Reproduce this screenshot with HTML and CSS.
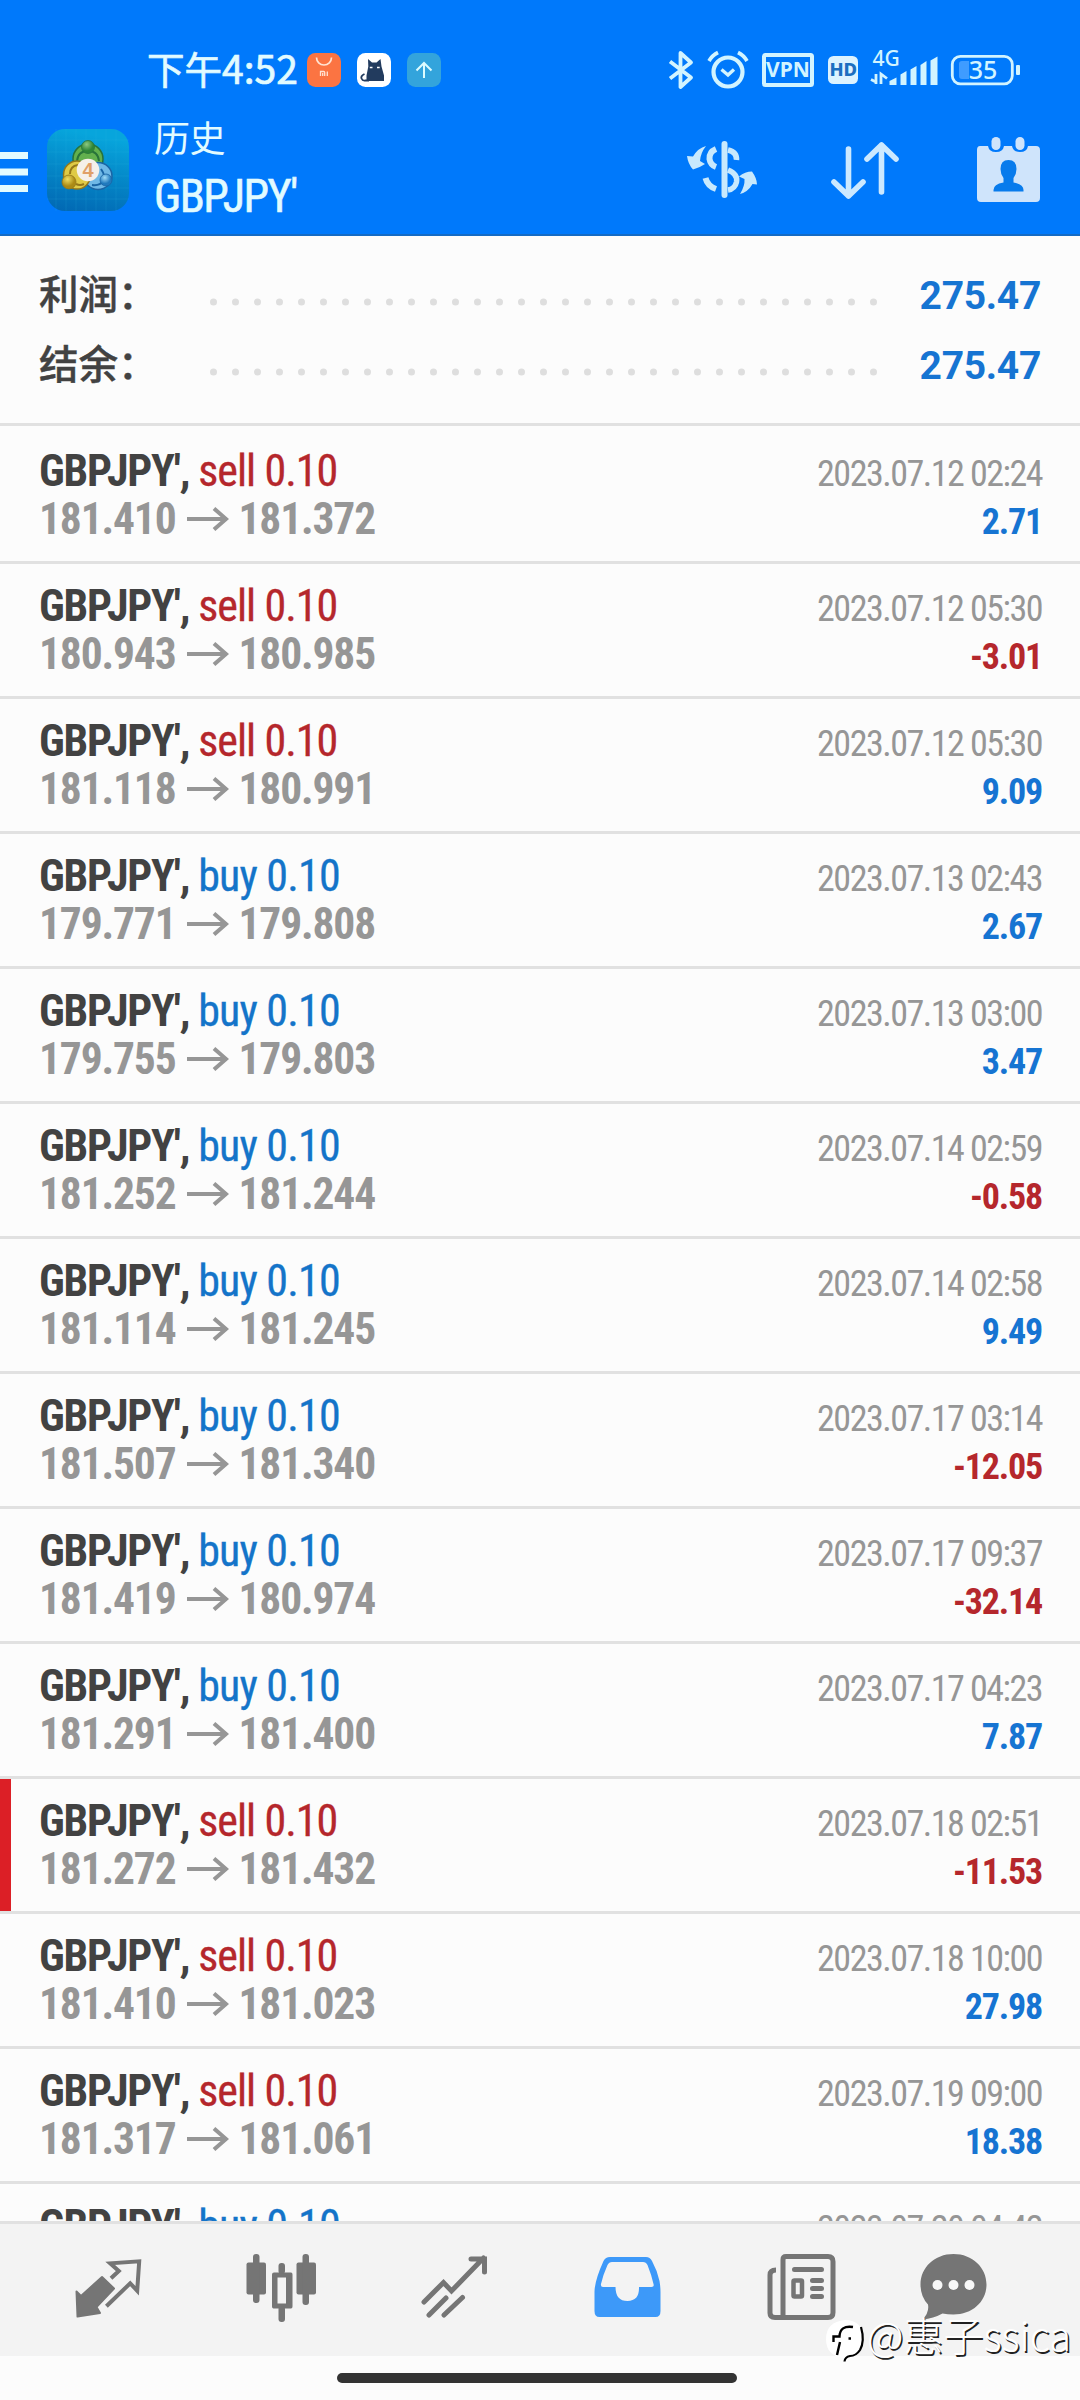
FILE: index.html
```html
<!DOCTYPE html>
<html lang="zh-CN">
<head>
<meta charset="utf-8">
<title>历史</title>
<link rel="stylesheet" href="styles.css">
</head>
<body>
<div class="screen">
  <header class="header">
    <div class="status">
      <div class="clock">下午<span class="digits">4:52</span></div>
      <div class="notifs">
        <svg width="34" height="34" viewBox="0 0 34 34"><rect width="34" height="34" rx="8.5" fill="#fb7442"/><path d="M9.500 4.500a7.500 7.500 0 0 0 15 0" fill="none" stroke="#ffe3d2" stroke-width="1.700"/><path d="M13.500 23v-4.500h3.200q1 0 1 1V23M15.700 20v3M20.300 18.500V23" fill="none" stroke="#ffe3d2" stroke-width="1.300"/></svg>
        <svg width="34" height="34" viewBox="0 0 34 34"><rect width="34" height="34" rx="8.500" fill="#fff"/><path d="M11 6l4 3.500h4.500L23.500 6l1 7.500 2.500 9V28H9.500v-5.500l1.800-9z" fill="#223b5e"/><path d="M7.500 21q-4 2-3 4.500t4 2H12" fill="none" stroke="#223b5e" stroke-width="1.800"/><path d="M12.800 14.500h2.700M20 14.500h2.700" stroke="#fff" stroke-width="1.300"/></svg>
        <svg width="34" height="34" viewBox="0 0 34 34"><rect width="34" height="34" rx="8.500" fill="#33a4dc"/><path d="M17 25V10.500M9.500 17.500L17 10l7.500 7.500" fill="none" stroke="#dcfbff" stroke-width="2"/></svg>
      </div>
      <div class="system">
        <svg width="38" height="50" viewBox="0 0 38 50"><path d="M4 16.500L25 32.500 14.500 42V8L25 17.500 4 33.500" fill="none" stroke="#d2f4ff" stroke-width="3.800" stroke-linejoin="round"/></svg>
        <svg width="53" height="50" viewBox="0 0 53 50"><circle cx="24" cy="27" r="14.500" fill="none" stroke="#d2f4ff" stroke-width="4.200"/><path d="M17.500 24.500l6.500 5.500 6-5.500" fill="none" stroke="#d2f4ff" stroke-width="3.300"/><path d="M5 16q3-5.500 9-8.500M43 16q-3-5.500-9-8.500" fill="none" stroke="#d2f4ff" stroke-width="3.700"/></svg>
        <svg width="62" height="50" viewBox="0 0 62 50"><rect x="7" y="10" width="48" height="30" rx="1.500" fill="none" stroke="#d2f4ff" stroke-width="4"/><text x="31" y="32" text-anchor="middle" class="vpn">VPN</text></svg>
        <svg width="46" height="50" viewBox="0 0 46 50"><rect x="9" y="11" width="30" height="28" rx="5.500" fill="#dcf3ff"/><text x="24.300" y="31" text-anchor="middle" class="hd">HD</text></svg>
        <svg width="80" height="50" viewBox="0 0 80 50"><text x="7.500" y="21" class="net">4G</text><path d="M6 34.500l5 2.500M11 29v10M16 39V29l6 4.500" fill="none" stroke="#d2f4ff" stroke-width="2.800"/><path d="M24.500 40v-4l7-3.500V40zM35.500 40V29.500l6-3.500v14zM45.500 40V24.500l6-3.500v19zM55.500 40V20l6-4v24zM65.500 40V15.500l7-4V40z" fill="#d2f4ff"/></svg>
        <svg width="82" height="50" viewBox="0 0 82 50"><rect x="7.300" y="11.300" width="60" height="27.500" rx="8" fill="none" stroke="#d2f4ff" stroke-width="2.800"/><path d="M17 16h7v18h-7q-3 0-3-3V19q0-3 3-3z" fill="#3f9cff"/><rect x="71" y="20" width="4" height="10" rx="1" fill="#d2f4ff"/><text x="38" y="34" text-anchor="middle" class="level">35</text></svg>
      </div>
    </div>
    <div class="toolbar">
      <svg class="burger" width="28" height="40" viewBox="0 0 28 40"><path d="M0 3.500h28M0 20h28M0 36.500h28" stroke="#e2fbff" stroke-width="7"/></svg>
      <svg class="logo" width="84" height="84" viewBox="0 0 84 84">
        <defs>
          <linearGradient id="tile" x1="0.200" y1="0" x2="0" y2="1"><stop offset="0" stop-color="#07a5dc"/><stop offset=".55" stop-color="#0482c4"/><stop offset="1" stop-color="#0166b2"/></linearGradient>
          <radialGradient id="green" cx=".4" cy=".3"><stop offset="0" stop-color="#8cc880"/><stop offset="1" stop-color="#2f8536"/></radialGradient>
          <radialGradient id="gold" cx=".4" cy=".3"><stop offset="0" stop-color="#f0df62"/><stop offset="1" stop-color="#ab8a15"/></radialGradient>
          <radialGradient id="sky" cx=".4" cy=".3"><stop offset="0" stop-color="#a0dcf8"/><stop offset="1" stop-color="#2079bd"/></radialGradient>
        </defs>
        <rect x="1" y="1" width="82" height="82" rx="18" fill="url(#tile)"/>
        <path d="M10 1v82M20 1v82M30 1v82M40 1v82M50 1v82M60 1v82M70 1v82M1 12h82M1 24h82M1 36h82M1 48h82M1 60h82M1 71h82" stroke="#35bce5" stroke-width=".5" opacity=".3"/>
        <circle cx="42" cy="31" r="15" fill="#62b04e" stroke="#28733a" stroke-width="1.500"/>
        <path d="M31 33q1-10 11-10t11 10" fill="none" stroke="#28733a" stroke-width="2"/>
        <ellipse cx="52" cy="48" rx="14" ry="13.500" fill="#6fb8e6" stroke="#1a65a5" stroke-width="1.500"/>
        <path d="M46 57q8 1 11-4t-2-12" fill="none" stroke="#1a65a5" stroke-width="2"/>
        <ellipse cx="31" cy="47" rx="13.500" ry="14" fill="#dfca45" stroke="#947719" stroke-width="1.500"/>
        <path d="M24 46q0-8 8-9M30 56q4 2 8 0" fill="none" stroke="#947719" stroke-width="2"/>
        <circle cx="42" cy="19" r="6.500" fill="url(#green)" stroke="#28733a" stroke-width=".8"/><circle cx="23" cy="54" r="7" fill="url(#gold)" stroke="#947719" stroke-width=".8"/><circle cx="60" cy="52" r="6" fill="url(#sky)" stroke="#1a65a5" stroke-width=".8"/>
        <circle cx="42" cy="42" r="11.300" fill="#f5f0e9"/><text x="42" y="49" text-anchor="middle" class="four">4</text>
      </svg>
      <div class="titles">
        <div class="title">历史</div>
        <div class="subtitle">GBPJPY'</div>
      </div>
      <div class="actions">
        <svg width="117" height="80" viewBox="0 0 117 80"><g fill="none" stroke="#c8e9fd"><path d="M46.500 14v51" stroke-width="6" stroke-linecap="round"/><path d="M38 19q-7 3-6.500 10 1 6 6.500 8M27.500 48q2 8 10.500 11" stroke-width="6"/><path d="M50 20q9 2 8.500 10M50 40q10 4 8.500 12Q57 59 50 60" stroke-width="5.500"/></g><path d="M28 16q-8 2-13 10.500l-6-.5q1 8 6 13.500 7-2 12-5.500l-5-3q.5-8 6-15zM62 64q8-2 12.500-10l4.500.5q0-6-5-13-7 0-13 5l5.500 2.500Q67 56 62 64z" fill="#c8e9fd"/></svg>
        <svg width="141" height="80" viewBox="0 0 141 80"><path d="M53.500 19v47M39 52l14.500 14L68 52M86.500 62V15M72 29l14.500-14L101 29" fill="none" stroke="#cce9ff" stroke-width="5.600" stroke-linecap="round" stroke-linejoin="round"/></svg>
        <svg width="144" height="80" viewBox="0 0 144 80"><path d="M44 16h8q1 6 8 6t8-6h8q1 6 8 6t8-6h8q4 0 4 4v48q0 4-4 4H45q-4 0-4-4V20q0-4 3-4z" fill="#cfe4fb"/><rect x="55.500" y="7" width="9" height="13" rx="4.500" fill="#cfe4fb"/><rect x="79.500" y="7" width="9" height="13" rx="4.500" fill="#cfe4fb"/><path d="M72.500 30q8 0 8 9 0 5-3 9v4.500q10 2 10 7.500v1.500h-30V60q0-6 10-7.500V48q-3-4-3-9 0-9 8-9z" fill="#087bec"/></svg>
      </div>
    </div>
  </header>

  <section class="summary">
    <div class="sum"><span class="label">利润：</span><svg class="dots" width="667" height="8" viewBox="0 0 667 8"><path d="M3.500 4h661" stroke="#dedede" stroke-width="7" stroke-linecap="round" stroke-dasharray="0 22"/></svg><span class="total">275.47</span></div>
    <div class="sum"><span class="label">结余：</span><svg class="dots" width="667" height="8" viewBox="0 0 667 8"><path d="M3.500 4h661" stroke="#dedede" stroke-width="7" stroke-linecap="round" stroke-dasharray="0 22"/></svg><span class="total">275.47</span></div>
  </section>

  <svg class="defs" width="0" height="0"><symbol id="arrow" viewBox="0 0 42 24"><path d="M0 12h39M27 1.500L39 12 27 22.500" fill="none" stroke="currentColor" stroke-width="4"/></symbol></svg>

  <main class="deals">
    <div class="deal"><div class="left"><div class="name">GBPJPY', <span class="sell">sell 0.10</span></div><div class="price">181.410<svg class="arrow"><use href="#arrow"/></svg>181.372</div></div><div class="right"><div class="date">2023.07.12 02:24</div><div class="gain">2.71</div></div></div>
    <div class="deal"><div class="left"><div class="name">GBPJPY', <span class="sell">sell 0.10</span></div><div class="price">180.943<svg class="arrow"><use href="#arrow"/></svg>180.985</div></div><div class="right"><div class="date">2023.07.12 05:30</div><div class="gain loss">-3.01</div></div></div>
    <div class="deal"><div class="left"><div class="name">GBPJPY', <span class="sell">sell 0.10</span></div><div class="price">181.118<svg class="arrow"><use href="#arrow"/></svg>180.991</div></div><div class="right"><div class="date">2023.07.12 05:30</div><div class="gain">9.09</div></div></div>
    <div class="deal"><div class="left"><div class="name">GBPJPY', <span class="buy">buy 0.10</span></div><div class="price">179.771<svg class="arrow"><use href="#arrow"/></svg>179.808</div></div><div class="right"><div class="date">2023.07.13 02:43</div><div class="gain">2.67</div></div></div>
    <div class="deal"><div class="left"><div class="name">GBPJPY', <span class="buy">buy 0.10</span></div><div class="price">179.755<svg class="arrow"><use href="#arrow"/></svg>179.803</div></div><div class="right"><div class="date">2023.07.13 03:00</div><div class="gain">3.47</div></div></div>
    <div class="deal"><div class="left"><div class="name">GBPJPY', <span class="buy">buy 0.10</span></div><div class="price">181.252<svg class="arrow"><use href="#arrow"/></svg>181.244</div></div><div class="right"><div class="date">2023.07.14 02:59</div><div class="gain loss">-0.58</div></div></div>
    <div class="deal"><div class="left"><div class="name">GBPJPY', <span class="buy">buy 0.10</span></div><div class="price">181.114<svg class="arrow"><use href="#arrow"/></svg>181.245</div></div><div class="right"><div class="date">2023.07.14 02:58</div><div class="gain">9.49</div></div></div>
    <div class="deal"><div class="left"><div class="name">GBPJPY', <span class="buy">buy 0.10</span></div><div class="price">181.507<svg class="arrow"><use href="#arrow"/></svg>181.340</div></div><div class="right"><div class="date">2023.07.17 03:14</div><div class="gain loss">-12.05</div></div></div>
    <div class="deal"><div class="left"><div class="name">GBPJPY', <span class="buy">buy 0.10</span></div><div class="price">181.419<svg class="arrow"><use href="#arrow"/></svg>180.974</div></div><div class="right"><div class="date">2023.07.17 09:37</div><div class="gain loss">-32.14</div></div></div>
    <div class="deal"><div class="left"><div class="name">GBPJPY', <span class="buy">buy 0.10</span></div><div class="price">181.291<svg class="arrow"><use href="#arrow"/></svg>181.400</div></div><div class="right"><div class="date">2023.07.17 04:23</div><div class="gain">7.87</div></div></div>
    <div class="deal marked"><div class="left"><div class="name">GBPJPY', <span class="sell">sell 0.10</span></div><div class="price">181.272<svg class="arrow"><use href="#arrow"/></svg>181.432</div></div><div class="right"><div class="date">2023.07.18 02:51</div><div class="gain loss">-11.53</div></div></div>
    <div class="deal"><div class="left"><div class="name">GBPJPY', <span class="sell">sell 0.10</span></div><div class="price">181.410<svg class="arrow"><use href="#arrow"/></svg>181.023</div></div><div class="right"><div class="date">2023.07.18 10:00</div><div class="gain">27.98</div></div></div>
    <div class="deal"><div class="left"><div class="name">GBPJPY', <span class="sell">sell 0.10</span></div><div class="price">181.317<svg class="arrow"><use href="#arrow"/></svg>181.061</div></div><div class="right"><div class="date">2023.07.19 09:00</div><div class="gain">18.38</div></div></div>
    <div class="deal"><div class="left"><div class="name">GBPJPY', <span class="buy">buy 0.10</span></div></div><div class="right"><div class="date">2023.07.20 04:42</div></div></div>
  </main>

  <nav class="tabs">
    <svg width="193" height="132" viewBox="0 0 193 132"><path d="M102 53l12 11.500L96.500 83l3.500 6-22.500 3.500-1-25 4.500 4.500z" fill="#757575" stroke="#757575" stroke-width="2" stroke-linejoin="round"/><path d="M111 54.300l7.800-7.300-8.600-7.700 29-2-2 29.400-7-7.400-23.800 23" fill="none" stroke="#757575" stroke-width="4"/></svg>
    <svg width="175" height="132" viewBox="0 0 175 132"><g fill="#757575"><rect x="53.500" y="38.500" width="19.500" height="32" rx="2"/><rect x="60" y="30" width="6.500" height="49" rx="3"/><rect x="103.500" y="38.500" width="19.500" height="32" rx="2"/><rect x="109.500" y="30" width="6.500" height="51" rx="3"/><path d="M81 48.500h17q1.500 0 1.500 2v32q0 2-1.500 2H80.500q-1.500 0-1.500-2v-32q0-2 2-2zM84.500 53.500v26h8.500v-26z" fill-rule="evenodd"/><rect x="85.500" y="39" width="6.500" height="11" rx="3"/><rect x="85.500" y="82" width="6.500" height="16" rx="3"/></g></svg>
    <svg width="172" height="132" viewBox="0 0 172 132"><path d="M56 78l19.500-19.500 8 8.500 32-33M103 35h13.500v13M61 91l17-17M76 91l18.500-17.500" fill="none" stroke="#757575" stroke-width="5" stroke-linecap="round" stroke-linejoin="miter"/></svg>
    <svg width="174" height="132" viewBox="0 0 174 132"><path d="M70 33h36q4 0 6 4 5 9 7.500 20 1 6 1 11v19q0 6-5 6h-56q-5 0-5-6V68q0-11 9-31 2-4 6.500-4zM72 38q-3 0-4.500 3Q63 51 61 60q-.500 3 2 3h12.500q0 14 12 14T99 63h12.500q3 0 2-3-2-9-6-19-1.500-3-4.500-3z" fill="#3d99f9" fill-rule="evenodd"/></svg>
    <svg width="164" height="132" viewBox="0 0 164 132"><path d="M72 32.500h42q5 0 5 5v51q0 5-5 5H69v-58q0-3 3-3z" fill="none" stroke="#757575" stroke-width="5"/><path d="M62 46q-6 0-6 5v38q0 4.500 5 4.500h12" fill="none" stroke="#757575" stroke-width="5"/><path d="M80.500 45.500h27M98.500 56.500h9M98.500 64.500h9M98.500 72.500h9" stroke="#757575" stroke-width="5" stroke-linecap="round"/><rect x="79.500" y="56.500" width="8.500" height="16" rx="1" fill="none" stroke="#757575" stroke-width="4.500"/></svg>
    <svg width="202" height="132" viewBox="0 0 202 132"><path d="M75.500 30c19 0 33 13.500 33 30.500s-14 30-33 30q-6 0-11-1-9 5-20 6 7-7 5.500-15-7.500-8-7.500-20C42.500 43.500 56.500 30 75.500 30z" fill="#757575"/><circle cx="59.500" cy="61" r="5" fill="#f8f8f8"/><circle cx="75.500" cy="61" r="5" fill="#f8f8f8"/><circle cx="91.500" cy="61" r="5" fill="#f8f8f8"/></svg>
  </nav>
  <footer class="gesture"><div class="pill"></div></footer>

  <div class="watermark">
    <svg width="42" height="50" viewBox="0 0 42 50"><path d="M20 2q18 0 18 19 0 17-14 19l-5 6v-6Q1 38 1 21T20 2z" fill="#fff"/><path d="M28 9q-13-2-13.500 9.500H8.500V24M15 24l-3 13M23.500 20.500h2.500" fill="none" stroke="#000" stroke-width="2.400"/><path d="M36 9q4 14-1 23-4 6-10 6-5 1-5.500 5.500" fill="none" stroke="#000" stroke-width="2.200"/></svg>
    <span class="handle">@惠子ssica</span>
  </div>
</div>
</body>
</html>
```
FILE: styles.css
```css
* { box-sizing: border-box; }
body { margin: 0; background: #fcfcfc; }
svg { display: block; flex: none; }

.screen {
  position: relative;
  display: flex;
  flex-direction: column;
  width: 1080px;
  height: 2400px;
  overflow: hidden;
  font-family: "Roboto Condensed", Roboto, "Noto Sans CJK SC", sans-serif;
}

/* header */
.header {
  height: 236px;
  flex: none;
  background: #0079fb;
  border-bottom: 2px solid #156bc4;
}
.status { display: flex; height: 115px; padding: 45px 56px 0 147px; }
.clock {
  width: 160px;
  height: 50px;
  margin-top: -3px;
  font: 37.5px/50px "Noto Sans CJK SC", sans-serif;
  color: #e2fbff;
  -webkit-text-stroke: 0.7px #e2fbff;
  white-space: nowrap;
}
.digits { font-size: 39px; }
.notifs { display: flex; gap: 16px; padding-top: 8px; }
.system { display: flex; margin-left: auto; margin-right: -3px; }
.vpn { font: 700 21px "Noto Sans", sans-serif; fill: #d2f4ff; }
.hd { font: 800 18.5px "Noto Sans", sans-serif; fill: #1c6fc0; }
.net { font: 500 21px "Noto Sans", sans-serif; fill: #d2f4ff; }
.level { font: 500 25px "Noto Sans", sans-serif; fill: #d2f4ff; }
.four { font: 700 20px "Liberation Sans", sans-serif; fill: #e0a067; }

.toolbar { display: flex; height: 119px; }
.burger { margin-top: 37px; }
.logo { margin: 13px 0 0 18px; }
.titles { margin: -3px 0 0 24px; color: #e2fbff; }
.title { font: 36px/48px "Noto Sans CJK SC", sans-serif; letter-spacing: -0.5px; }
.subtitle {
  margin-top: 8px;
  font-size: 46px;
  line-height: 56px;
  letter-spacing: -1.5px;
  -webkit-text-stroke: 0.6px #e2fbff;
}
.actions { display: flex; margin-left: auto; padding-top: 15px; }

/* totals */
.summary {
  height: 190px;
  flex: none;
  padding: 23px 39px 0;
  border-bottom: 3px solid #e1e1e1;
}
.sum { display: flex; align-items: center; height: 70px; }
.label {
  width: 171px;
  margin-top: -4px;
  font: 500 39.5px/70px "Noto Sans CJK SC", sans-serif;
  color: #424242;
  -webkit-text-stroke: 0.4px #424242;
}
.dots { margin-top: 16px; }
.total {
  margin: 3px 0 0 auto;
  font: 700 39px/70px Roboto, sans-serif;
  letter-spacing: -0.3px;
  color: #1674d2;
}

/* history */
.defs { position: absolute; }
.deals { flex: none; height: 1795px; overflow: hidden; padding-top: 3px; }
.deal {
  display: flex;
  justify-content: space-between;
  height: 135px;
  padding: 18px 38px 0 39px;
  border-bottom: 3px solid #e1e1e1;
}
.marked { box-shadow: inset 11px 0 #dc1f26; }
.name { font-size: 44px; line-height: 48px; font-weight: 700; color: #424242; letter-spacing: -1.2px; white-space: nowrap; }
.sell, .buy { font-weight: 400; -webkit-text-stroke: 0.3px currentColor; }
.sell { color: #b5272c; letter-spacing: -0.95px; }
.buy { color: #1474c9; letter-spacing: -0.8px; }
.price { display: flex; align-items: center; padding-top: 1px; font-size: 43.5px; line-height: 48px; font-weight: 700; color: #969696; letter-spacing: -1.15px; }
.arrow { width: 42px; height: 24px; margin: -3px 10px 0 11px; }
.right { padding-top: 3px; text-align: right; }
.date { font-size: 36px; line-height: 48px; color: #969696; letter-spacing: -1.5px; }
.gain { font-size: 36px; line-height: 48px; font-weight: 700; color: #1674d2; letter-spacing: -1.2px; }
.loss { color: #b5272c; }

/* bottom */
.tabs {
  display: flex;
  flex: none;
  height: 135px;
  border-top: 3px solid #e1e1e1;
  background: #f3f3f3;
}
.gesture { display: flex; justify-content: center; height: 44px; padding-top: 17px; }
.pill { width: 400px; height: 10px; border-radius: 5px; background: #333; margin-right: 7px; }

.watermark {
  position: absolute;
  left: 825px;
  top: 2318px;
  display: flex;
  color: #fff;
}
.handle {
  margin-top: -7px;
  font: 300 40px/46px "Noto Sans CJK SC", sans-serif;
  text-shadow: 1.5px 1.5px 0 #222;
  white-space: nowrap;
}
```
